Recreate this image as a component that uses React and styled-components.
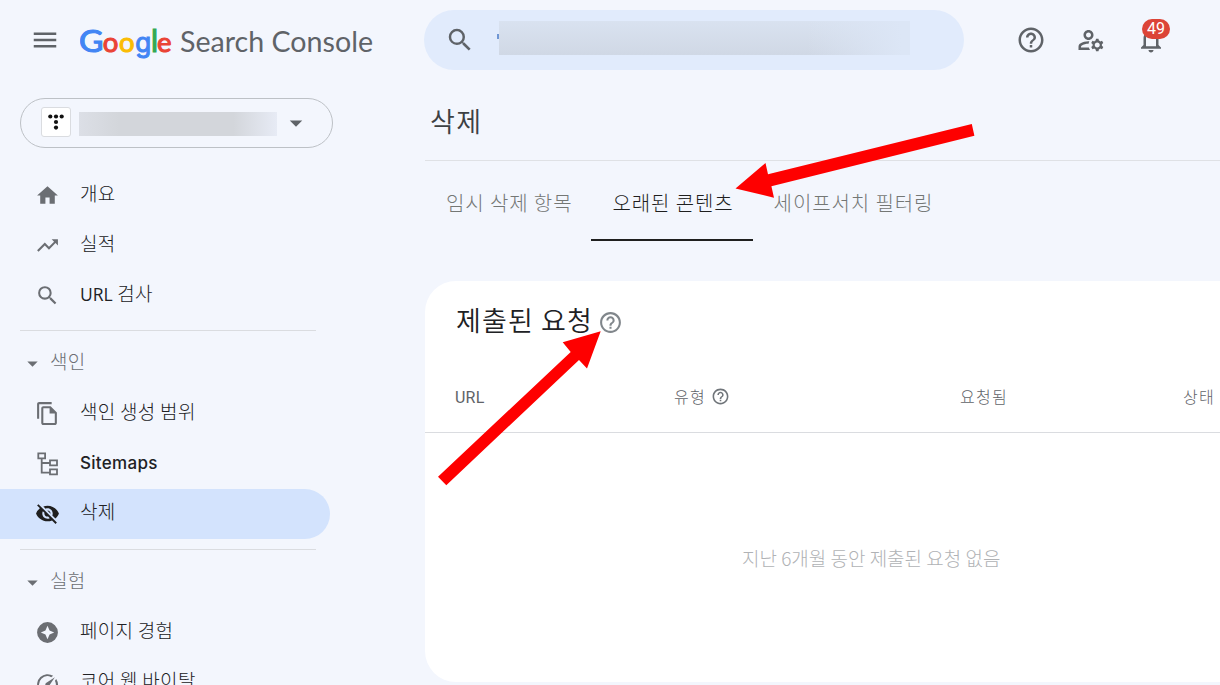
import styled, { createGlobalStyle } from "styled-components";
import {
    MdMenu,
    MdSearch,
    MdHelpOutline,
    MdOutlineManageAccounts,
    MdNotificationsNone,
    MdHome,
    MdTrendingUp,
    MdVisibilityOff,
    MdSpeed,
    MdArrowDropDown,
} from "react-icons/md";

const CopyIcon = () => (
    <svg width="25" height="25" viewBox="0 0 24 24" fill="currentColor">
        <path d="M16 1H4c-1.1 0-2 .9-2 2v14h2V3h12V1zm-1 4H8c-1.1 0-1.99.9-1.99 2L6 21c0 1.1.89 2 1.99 2H19c1.1 0 2-.9 2-2V11l-6-6zM8 21V7h6v5h5v9H8z" />
    </svg>
);

const SitemapIcon = () => (
    <svg width="25" height="25" viewBox="0 0 25 25" fill="none" stroke="currentColor" strokeWidth="1.8">
        <path d="M3.3 2.3h6.8v5H3.3zM15 9.3h7v5h-7zM15 18.3h7v5h-7zM6.7 7.5v14.2H15M6.7 12H15" />
    </svg>
);

const ExperienceIcon = () => (
    <svg width="25" height="25" viewBox="0 0 24 24" fill="currentColor">
        <path fillRule="evenodd" d="M12 2a10 10 0 1 0 0 20 10 10 0 0 0 0-20zm0 3.6 2 4.4 4.4 2-4.4 2-2 4.4-2-4.4-4.4-2 4.4-2z" />
    </svg>
);

const Logo = () => (
    <svg width="300" height="44" viewBox="0 0 300 44">
        <g fontFamily="Lato, sans-serif" fontSize="30" fontWeight="400" strokeWidth="1.1">
            <text x="-1" y="34" fill="#4285f4" stroke="#4285f4" textLength="24.5" lengthAdjust="spacingAndGlyphs">G</text>
            <text x="22.8" y="33.8" fontSize="27.5" fill="#ea4335" stroke="#ea4335">o</text>
            <text x="39" y="33.8" fontSize="27.5" fill="#fbbc04" stroke="#fbbc04">o</text>
            <text x="55.3" y="33.5" fontSize="26" fontFamily="Inter, sans-serif" fill="#4285f4" stroke="#4285f4">g</text>
            <text x="71" y="34" fill="#34a853" stroke="#34a853">l</text>
            <text x="77" y="33.8" fontSize="27.5" fill="#ea4335" stroke="#ea4335">e</text>
            <text x="100" y="34" fontSize="28" fill="#5f6368" textLength="193" lengthAdjust="spacingAndGlyphs">
                Search Console
            </text>
        </g>
    </svg>
);

const SiteIcon = () => (
    <svg width="16" height="16" viewBox="0 0 16 16" fill="#111">
        <circle cx="2.3" cy="2.5" r="2.1" />
        <circle cx="8" cy="2.5" r="2.1" />
        <circle cx="13.7" cy="2.5" r="2.1" />
        <circle cx="8" cy="8" r="2.1" />
        <circle cx="8" cy="13.6" r="2.1" />
    </svg>
);

const mainNav = [
    { icon: <MdHome />, label: "개요" },
    { icon: <MdTrendingUp />, label: "실적" },
    { icon: <MdSearch />, label: "URL 검사" },
];

const indexNav = [
    { icon: <CopyIcon />, label: "색인 생성 범위" },
    { icon: <SitemapIcon />, label: "Sitemaps", latin: true },
    { icon: <MdVisibilityOff />, label: "삭제", active: true },
];

const labNav = [
    { icon: <ExperienceIcon />, label: "페이지 경험" },
    { icon: <MdSpeed />, label: "코어 웹 바이탈" },
];

const NavList = ({ items, raised }) => (
    <>
        {items.map((item) => (
            <NavItem key={item.label} $active={item.active} $raised={raised}>
                {item.icon}
                {item.label.startsWith("URL") ? (
                    <NavLabel $low><Latin>URL</Latin>{item.label.slice(3)}</NavLabel>
                ) : (
                    <NavLabel $latin={item.latin}>{item.label}</NavLabel>
                )}
            </NavItem>
        ))}
    </>
);

const App = () => {
    return (
        <>
            <GlobalStyle />
            <Page>
                <Header>
                    <Brand>
                        <MdMenu />
                        <Logo />
                    </Brand>
                    <SearchBar>
                        <MdSearch />
                        <Caret />
                        <SearchMask />
                    </SearchBar>
                    <Actions>
                        <MdHelpOutline />
                        <MdOutlineManageAccounts />
                        <Bell>
                            <MdNotificationsNone />
                            <Badge>49</Badge>
                        </Bell>
                    </Actions>
                </Header>
                <Body>
                    <Sidebar>
                        <Property>
                            <Favicon><SiteIcon /></Favicon>
                            <PropertyMask />
                            <MdArrowDropDown />
                        </Property>
                        <NavList items={mainNav} />
                        <Divider />
                        <NavGroup><MdArrowDropDown /><span>색인</span></NavGroup>
                        <NavList items={indexNav} raised />
                        <Divider />
                        <NavGroup><MdArrowDropDown /><span>실험</span></NavGroup>
                        <NavList items={labNav} raised />
                    </Sidebar>
                    <Main>
                        <PageTitle>삭제</PageTitle>
                        <Tabs>
                            <Tab>임시 삭제 항목</Tab>
                            <Tab $active>오래된 콘텐츠</Tab>
                            <Tab>세이프서치 필터링</Tab>
                        </Tabs>
                        <Card>
                            <CardTitle>
                                <span>제출된 요청</span>
                                <MdHelpOutline />
                            </CardTitle>
                            <TableHead>
                                <HeadLatin>URL</HeadLatin>
                                <HeadCell><span>유형</span> <MdHelpOutline /></HeadCell>
                                <HeadCell><span>요청됨</span></HeadCell>
                                <HeadCell><span>상태</span></HeadCell>
                            </TableHead>
                            <Empty>지난 6개월 동안 제출된 요청 없음</Empty>
                        </Card>
                    </Main>
                </Body>
                <Arrows viewBox="0 0 1220 685">
                    <path d="M735.5 188.5 765.5 163 768 174.3 971.8 124 974.4 135.7 771.4 186.3 774 197.7z" />
                    <path d="M600.7 331.3 587 368.5 579 360 446.3 485.2 438 476.7 570.7 352 562.7 342.3z" />
                </Arrows>
            </Page>
        </>
    );
};

const GlobalStyle = createGlobalStyle`
* {
    box-sizing: border-box;
}
body {
    margin: 0;
    font-family: "Noto Sans CJK KR", sans-serif;
    font-weight: 300;
}
svg {
    display: block;
    flex: none;
}
`
const Page = styled.div`
position: relative;
width: 1220px;
height: 685px;
overflow: hidden;
background: #f3f6fd;
color: #202124;
`
const Header = styled.header`
display: flex;
height: 80px;
align-items: center;
`
const Brand = styled.div`
display: flex;
align-items: center;
width: 424px;
padding-left: 30px;
gap: 20px;
color: #5f6368;

& > svg:first-child {
    width: 30px;
    height: 30px;
}
`
const SearchBar = styled.div`
display: flex;
align-items: center;
width: 540px;
height: 60px;
padding-left: 21px;
border-radius: 30px;
background: #e1ebfc;
color: #5f6368;

& > svg {
    width: 30px;
    height: 30px;
}
`
const Caret = styled.i`
width: 2px;
height: 5px;
margin: 0 0 7px 22px;
background: #6f96d4;
`
const SearchMask = styled.div`
width: 411px;
height: 34px;
margin-bottom: 4px;
background: linear-gradient(90deg, rgba(221, 231, 247, 0) 75%, #dce6f6 98%), linear-gradient(#d9e2f0, #d0d8e5);
`
const Actions = styled.div`
display: flex;
align-items: center;
gap: 30px;
margin-left: 52px;
color: #5f6368;

& svg {
    width: 30px;
    height: 30px;
}
`
const Bell = styled.div`
position: relative;
`
const Badge = styled.span`
position: absolute;
top: -6px;
left: 6px;
width: 28px;
height: 20px;
border-radius: 10px;
background: #dc4437;
color: #fff;
font: 400 16px/20px Roboto, sans-serif;
text-align: center;
`
const Body = styled.div`
display: flex;
`
const Sidebar = styled.nav`
width: 425px;
padding-top: 18px;
`
const Property = styled.div`
display: flex;
align-items: center;
width: 313px;
height: 50px;
margin: 0 0 22px 20px;
padding-left: 20px;
border: 1px solid #bdc1c6;
border-radius: 25px;
color: #5f6368;

& > svg {
    width: 30px;
    height: 30px;
    margin-left: 4px;
}
`
const Favicon = styled.div`
display: grid;
place-items: center;
width: 30px;
height: 30px;
margin-bottom: 2px;
border: 1px solid #dadce0;
border-radius: 3px;
background: #fff;
`
const PropertyMask = styled.div`
width: 198px;
height: 24px;
margin-left: 8px;
margin-top: 1px;
background: linear-gradient(90deg, #dcdfe6, #d3d6db 20%, #d3d6db 78%, #e7ebf5);
`
const NavItem = styled.div`
display: flex;
align-items: center;
width: 330px;
height: 50px;
padding-left: 35px;
padding-bottom: ${(p) => (p.$raised ? 2 : 0)}px;
gap: 20px;
border-radius: 0 25px 25px 0;
background: ${(p) => (p.$active ? "#d3e3fd" : "transparent")};
color: ${(p) => (p.$active ? "#1f1f1f" : "#6b6e73")};

& > svg {
    width: 25px;
    height: 25px;
}
`
const NavLabel = styled.span`
color: #202124;
font-family: ${(p) => (p.$latin ? "Inter" : '"Noto Sans CJK KR"')}, sans-serif;
font-size: ${(p) => (p.$latin ? 17 : 19)}px;
font-weight: ${(p) => (p.$latin ? 500 : 300)};
letter-spacing: 0.3px;
line-height: 24px;
margin-bottom: ${(p) => (p.$latin ? 0 : p.$low ? 3 : 5)}px;
`
const Latin = styled.span`
font-family: "Open Sans", sans-serif;
font-size: 17.5px;
font-weight: 500;
letter-spacing: 0;
`
const Divider = styled.div`
width: 296px;
height: 1px;
margin: 10px 0 8px 20px;
background: #dadce0;
`
const NavGroup = styled.div`
display: flex;
align-items: center;
height: 50px;
padding: 0 0 2px 20px;
gap: 5px;
color: #6b6e73;
font-size: 19px;
letter-spacing: 0.3px;

& > svg {
    width: 25px;
    height: 25px;
}
& > span {
    margin-bottom: 5px;
}
`
const Main = styled.main`
width: 795px;
`
const PageTitle = styled.h1`
height: 81px;
margin: 0;
padding-left: 5px;
border-bottom: 1px solid #dfe1e5;
color: #3c4043;
font-size: 27px;
font-weight: 350;
letter-spacing: 1.5px;
line-height: 81px;
`
const Tabs = styled.div`
display: flex;
height: 80px;
`
const Tab = styled.div`
padding: 0 19px 0 21px;
border-bottom: 2px solid ${(p) => (p.$active ? "#1f1f1f" : "transparent")};
color: ${(p) => (p.$active ? "#1f1f1f" : "#747775")};
font-size: 20px;
letter-spacing: 0.9px;
line-height: 83px;
white-space: nowrap;
`
const Card = styled.section`
width: 860px;
height: 401px;
margin-top: 40px;
border-radius: 31px;
background: #fff;
`
const CardTitle = styled.h2`
display: flex;
align-items: center;
height: 80px;
margin: 0;
padding: 0 0 3px 31px;
gap: 5px;
font-size: 27px;
font-weight: 350;
letter-spacing: 1.1px;

& > svg {
    width: 25px;
    height: 25px;
    margin-top: 5px;
    color: #80868b;
}
`
const TableHead = styled.div`
display: grid;
grid-template-columns: 218px 286px 223px 1fr;
align-items: center;
height: 72px;
padding-left: 30px;
border-bottom: 1px solid #dadce0;
color: #5f6368;
`
const HeadCell = styled.div`
display: flex;
align-items: center;
gap: 5px;
padding-left: 1px;
font-size: 16px;
letter-spacing: 1.3px;

& > span {
    margin-bottom: 2px;
}
& > svg {
    width: 19px;
    height: 19px;
    color: #70757a;
}
`
const HeadLatin = styled(HeadCell)`
padding: 2px 0 0;
font-family: Roboto, sans-serif;
font-weight: 400;
letter-spacing: 0.2px;
`
const Empty = styled.p`
margin: 0;
padding: 111px 0 0 317px;
color: #b0b2b5;
font-size: 19px;
line-height: 28px;
`
const Arrows = styled.svg`
position: absolute;
top: 0;
left: 0;
width: 1220px;
height: 685px;
fill: #fe0000;
pointer-events: none;
`

export default App;
